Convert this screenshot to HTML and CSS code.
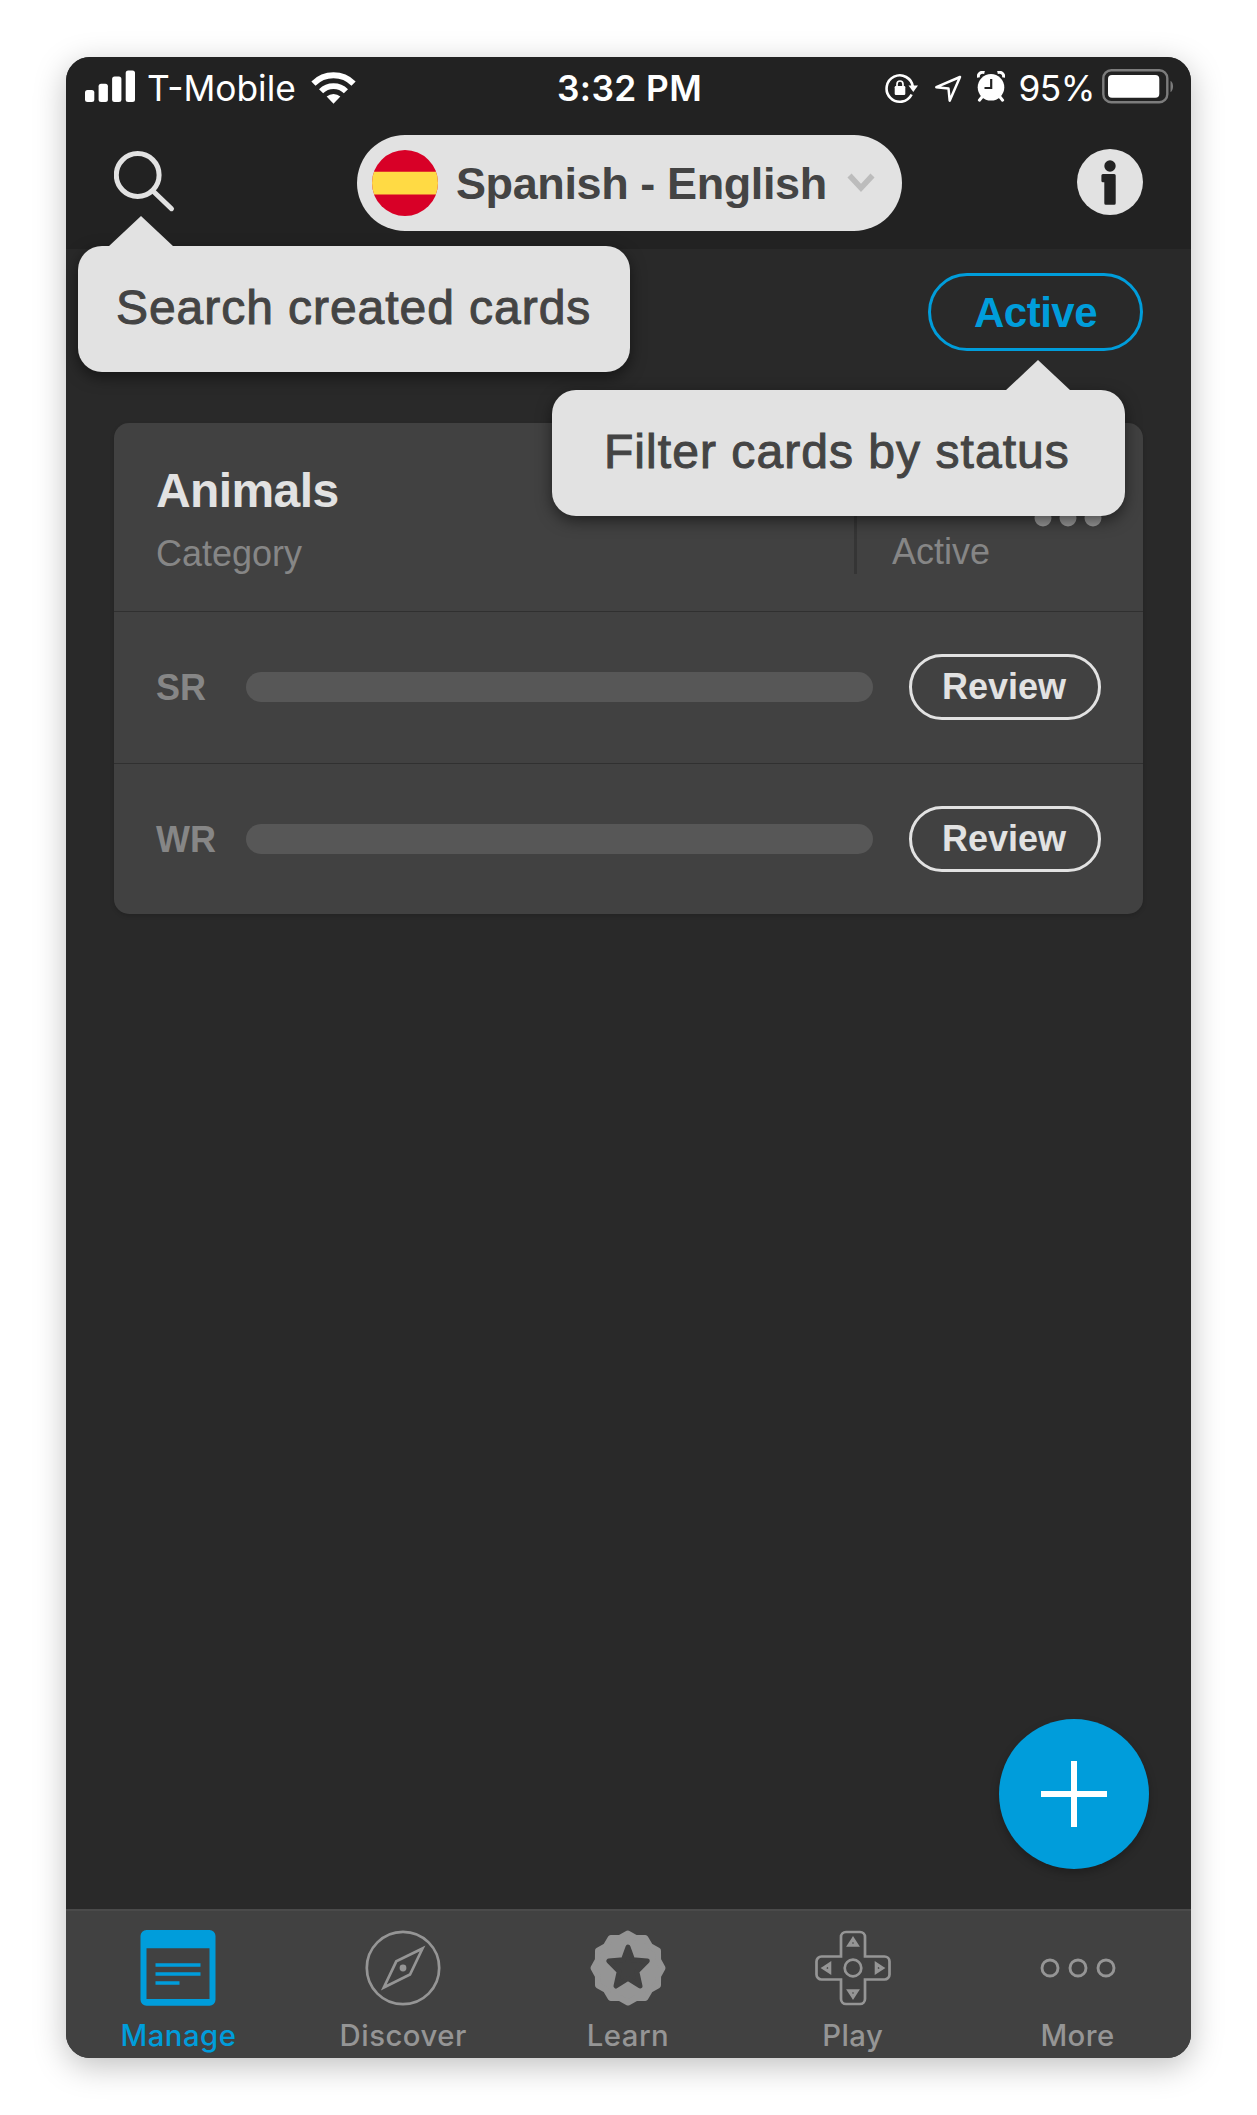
FILE: index.html
```html
<!DOCTYPE html>
<html lang="en">
<head>
<meta charset="utf-8">
<title>Manage cards</title>
<link rel="stylesheet" href="styles.css">
</head>
<body>
<div class="phone">
  <header class="header">
    <div class="status">
      <div class="status-left">
        <svg class="signal" width="50" height="32" viewBox="0 0 50 32"><g fill="#fff"><rect x="0" y="20" width="9.3" height="12" rx="2.5"/><rect x="13.6" y="13.7" width="9.3" height="18.3" rx="2.5"/><rect x="27.1" y="6.5" width="9.3" height="25.5" rx="2.5"/><rect x="40.7" y="0.5" width="9.3" height="31.5" rx="2.5"/></g></svg>
        <span class="carrier">T-Mobile</span>
        <svg class="wifi" width="45" height="33" viewBox="0 0 46 33"><g fill="none" stroke="#fff" stroke-width="6"><path d="M2.5 12.5a29 29 0 0 1 41 0"/><path d="M10.3 20.3a18 18 0 0 1 25.4 0"/></g><path d="M23 33l-7-7.2a10.5 10.5 0 0 1 14 0z" fill="#fff"/></svg>
      </div>
      <span class="clock">3:32 PM</span>
      <div class="status-right">
        <svg class="lock" width="33" height="32" viewBox="0 0 33 32"><path d="M26.600 22.500a13.200 13.200 0 1 1 1.300-7.500" fill="none" stroke="#fff" stroke-width="2.600"/><path d="M23.500 13.500h9.500l-4.700 6.500z" fill="#fff"/><rect x="9.700" y="14" width="10.600" height="9" rx="1.200" fill="#fff"/><path d="M12 14.500v-2.300a3 3.200 0 0 1 6 0v2.300" fill="none" stroke="#fff" stroke-width="1.700"/></svg>
        <svg class="arrow" width="28" height="28" viewBox="0 0 28 28"><path d="M26 2L2.300 12.200l12.200 1.300 1.200 12.200z" fill="none" stroke="#fff" stroke-width="2.500" stroke-linejoin="round"/></svg>
        <svg class="alarm" width="28" height="31" viewBox="0 0 28 31"><circle cx="14" cy="16.300" r="13.300" fill="#fff"/><path d="M1.500 6.500C.6 3 3.500.5 7.500 1.500M26.500 6.500c.9-3.500-2-6-6-5" fill="none" stroke="#fff" stroke-width="3"/><path d="M5 26l-2.600 3.200M23 26l2.600 3.200" stroke="#fff" stroke-width="3" stroke-linecap="round"/><path d="M14.200 8v9H7.500" fill="none" stroke="#222" stroke-width="2.200"/></svg>
        <span class="percent">95%</span>
        <svg class="battery" width="72" height="35" viewBox="0 0 72 35"><rect x="1.300" y="1.300" width="64" height="32" rx="8" fill="none" stroke="#7c7c7c" stroke-width="2.400"/><rect x="6" y="6" width="51.300" height="22.700" rx="4" fill="#fff"/><path d="M68.500 11.800c3.400 2 3.400 9.400 0 11.400z" fill="#7c7c7c"/></svg>
      </div>
    </div>
    <nav class="nav">
      <div class="search">
        <svg width="62" height="64" viewBox="0 0 62 64"><g fill="none" stroke="#e2e2e2" stroke-width="5"><circle cx="23.700" cy="25" r="21.400"/><path d="M39.500 41.500L57.500 58.700" stroke-linecap="round"/></g></svg>
        <div class="tip tip-search">Search created cards</div>
      </div>
      <div class="language">
        <svg class="flag" width="66" height="66" viewBox="0 0 66 66"><clipPath id="disc"><circle cx="33" cy="33" r="33"/></clipPath><g clip-path="url(#disc)"><path fill="#d80027" d="M0 0h66v66H0z"/><path fill="#ffda44" d="M0 21.700h66v22.800H0z"/></g></svg>
        <span class="language-name">Spanish - English</span>
        <svg class="chevron" width="28" height="20" viewBox="0 0 28 20"><path d="M2.500 2.500L14 14.800 25.500 2.500" fill="none" stroke="#bcbcbc" stroke-width="5.600"/></svg>
      </div>
      <svg class="info" width="66" height="66" viewBox="0 0 66 66"><circle cx="33" cy="33" r="33" fill="#e2e2e2"/><circle cx="33" cy="17" r="5.700" fill="#222"/><path d="M25.900 25h11.300a1.500 1.500 0 0 1 1.500 1.500v27.800a1.500 1.500 0 0 1-1.500 1.500h-8.400a1.500 1.500 0 0 1-1.500-1.500V33.200h-1.400a1.500 1.500 0 0 1-1.500-1.500v-5.200a1.500 1.500 0 0 1 1.500-1.500z" fill="#222"/></svg>
    </nav>
  </header>

  <main class="content">
    <div class="filter">
      <div class="filter-button">Active</div>
      <div class="tip tip-filter">Filter cards by status</div>
    </div>

    <section class="card">
      <div class="card-head">
        <div class="card-title">
          <h1>Animals</h1>
          <p>Category</p>
        </div>
        <div class="card-state">
          <span>Active</span>
        </div>
        <svg class="dots" width="68" height="18" viewBox="0 0 68 18"><g fill="#979797"><circle cx="9" cy="9" r="8.500"/><circle cx="34" cy="9" r="8.500"/><circle cx="59" cy="9" r="8.500"/></g></svg>
      </div>
      <div class="row"><span class="mode">SR</span><div class="bar"></div><div class="review">Review</div></div>
      <div class="row"><span class="mode">WR</span><div class="bar"></div><div class="review">Review</div></div>
    </section>

    <div class="add">
      <svg width="66" height="66" viewBox="0 0 66 66"><path d="M33 0v66M0 33h66" stroke="#fff" stroke-width="6"/></svg>
    </div>
  </main>

  <footer class="tabs">
    <div class="tab tab-on">
      <svg width="76" height="76" viewBox="0 0 76 76"><path fill="currentColor" fill-rule="evenodd" d="M6.500 0h63a6 6 0 0 1 6 6v63.700a6 6 0 0 1-6 6h-63a6 6 0 0 1-6-6V6a6 6 0 0 1 6-6zm0 18.200V69h63V18.200z"/><path d="M15.500 35h45M15.500 44h45M15.500 53h24" stroke="currentColor" stroke-width="3.600"/></svg>
      <span>Manage</span>
    </div>
    <div class="tab">
      <svg width="76" height="76" viewBox="0 0 76 76"><g fill="none" stroke="currentColor" stroke-width="2.700"><circle cx="38" cy="38" r="36.200"/><path d="M57.500 18.500L45 44.500 18.800 57.500 31.300 31.300z"/></g><circle cx="38" cy="38" r="3.400" fill="currentColor"/></svg>
      <span>Discover</span>
    </div>
    <div class="tab">
      <svg width="76" height="76" viewBox="0 0 76 76"><path fill="currentColor" stroke="currentColor" stroke-width="6" stroke-linejoin="round" d="M38 3.500L46 8 55.300 8.100 60 16 68 20.700 68.100 30 72.500 38 68.100 46 68 55.300 60 60 55.300 68 46 68.100 38 72.500 30 68.100 20.700 68 16 60 8 55.300 7.900 46 3.500 38 7.900 30 8 20.700 16 16 20.700 8 30 7.900z"/><path fill="#414141" stroke="#414141" stroke-width="5" stroke-linejoin="round" d="M38 17l4.600 12.800 14.600 1.300-10.400 10.400L50 56 38 48.500 26 56l3.200-14.500L18.800 31.100l14.600-1.300z"/></svg>
      <span>Learn</span>
    </div>
    <div class="tab">
      <svg width="76" height="76" viewBox="0 0 76 76"><g fill="none" stroke="currentColor" stroke-width="2.700"><path d="M31 2h14a5 5 0 0 1 5 5v19.500h19.500a5 5 0 0 1 5 5v13a5 5 0 0 1-5 5H50V69a5 5 0 0 1-5 5H31a5 5 0 0 1-5-5V49.500H6.500a5 5 0 0 1-5-5v-13a5 5 0 0 1 5-5H26V7a5 5 0 0 1 5-5z"/><circle cx="38" cy="38" r="8.300"/><path d="M38 9l-4 6.200h8zM38 67l-4-6.200h8zM8.500 38l6.200-4v8zM67.500 38l-6.200-4v8z" stroke-width="3.200"/></g></svg>
      <span>Play</span>
    </div>
    <div class="tab">
      <svg width="76" height="76" viewBox="0 0 76 76"><g fill="none" stroke="currentColor" stroke-width="2.900"><circle cx="10" cy="38" r="8"/><circle cx="38" cy="38" r="8"/><circle cx="66" cy="38" r="8"/></g></svg>
      <span>More</span>
    </div>
  </footer>
</div>
</body>
</html>
```
FILE: styles.css
```css
* { box-sizing: border-box; }
body {
  margin: 0;
  padding: 57px 66px;
  background: #fff;
  font-family: "Liberation Sans", Arial, sans-serif;
  color: #e2e2e2;
}
svg { display: block; flex: none; }

.phone {
  display: flex;
  flex-direction: column;
  width: 1125px;
  height: 2001px;
  border-radius: 24px;
  background: #292929;
  box-shadow: 0 8px 32px rgba(0, 0, 0, .25);
}

/* Header */
.header {
  flex: none;
  height: 192px;
  border-radius: 24px 24px 0 0;
  background: #222;
}
.status {
  display: grid;
  grid-template-columns: 1fr auto 1fr;
  align-items: center;
  height: 60px;
  padding: 4px 17px 0 19px;
  font: 400 35.300px/44px Inter, sans-serif;
  color: #fff;
}
.status-left, .status-right { display: flex; align-items: center; }
.status-right { justify-content: flex-end; }
.signal { margin-top: -7px; }
.carrier { margin-left: 12px; letter-spacing: 0; }
.wifi { margin: -4px 0 0 15px; }
.clock { font-weight: 600; letter-spacing: .4px; }
.lock { margin-top: -3px; }
.arrow { margin-left: 16px; }
.alarm { margin: -6px 0 0 15px; }
.percent { margin-left: 13px; letter-spacing: -.5px; }
.battery { margin: -6px 0 0 7px; }

.nav {
  display: flex;
  align-items: center;
  justify-content: space-between;
  height: 132px;
  padding: 0 48px;
}
.search { position: relative; width: 68px; height: 66px; }
.language {
  display: flex;
  align-items: center;
  width: 545px;
  height: 96px;
  padding: 0 27px 0 15px;
  border-radius: 48px;
  background: #e2e2e2;
  color: #444;
}
.language-name {
  margin: 2px 0 0 18px;
  font-size: 45px;
  font-weight: 700;
  line-height: 54px;
  letter-spacing: -.400px;
  white-space: nowrap;
}
.chevron { margin-left: auto; }
.info { margin-top: -3px; }

/* Callouts float above the screen */
.tip {
  position: absolute;
  z-index: 2;
  height: 126px;
  border-radius: 24px;
  background: #e2e2e2;
  box-shadow: 0 5px 15px rgba(0, 0, 0, .5);
  color: #444;
  font-size: 48px;
  line-height: 124px;
  letter-spacing: .950px;
  white-space: nowrap;
  -webkit-text-stroke: 1px #444;
}
.tip::before {
  content: "";
  position: absolute;
  top: -30px;
  width: 66px;
  height: 31px;
  background: #e2e2e2;
  clip-path: polygon(50% 0, 100% 100%, 0 100%);
}
.tip-search { top: 96px; left: -36px; width: 552px; padding-left: 38px; }
.tip-search::before { left: 30px; }
.tip-filter { top: 117px; right: 18px; width: 573px; padding-left: 52px; letter-spacing: 1.050px; }
.tip-filter::before { right: 54px; }

/* Content */
.content {
  display: flex;
  flex: 1;
  flex-direction: column;
  padding: 24px 48px 40px;
}
.filter {
  position: relative;
  display: flex;
  justify-content: flex-end;
  margin: 0 0 72px;
}
.filter-button {
  width: 215px;
  height: 78px;
  border: 3px solid #009ddb;
  border-radius: 39px;
  color: #009ddb;
  font-size: 42px;
  font-weight: 700;
  line-height: 73px;
  letter-spacing: -.5px;
  text-align: center;
}

.card {
  height: 490.500px;
  border-radius: 15px;
  background: #414141;
  box-shadow: 0 2px 4px rgba(0, 0, 0, .15);
}
.card-head {
  display: flex;
  height: 188px;
  padding: 39px 42px 0;
}
.card-title { flex: none; width: 698px; }
.card h1 {
  margin: 0;
  font-size: 48px;
  line-height: 58px;
  letter-spacing: -.600px;
}
.card p {
  margin: 12px 0 0;
  color: #868686;
  font-size: 36px;
  line-height: 44px;
}
.card-state {
  display: flex;
  flex: none;
  align-items: flex-end;
  width: 151px;
  height: 112px;
  padding-left: 35px;
  border-left: 3px solid #353535;
  color: #868686;
  font-size: 36px;
  line-height: 44px;
}
.dots { margin: 47px 0 0 29px; }

.row {
  display: flex;
  align-items: center;
  height: 151.500px;
  padding: 0 42px;
  border-top: 1px solid #303030;
}
.mode {
  width: 90px;
  padding-top: 2px;
  color: #868686;
  font-size: 36px;
  font-weight: 700;
}
.bar {
  flex: 1;
  height: 30px;
  border-radius: 15px;
  background: #575757;
}
.review {
  width: 192px;
  height: 66px;
  margin-left: 36px;
  padding-right: 2px;
  border: 3px solid #e2e2e2;
  border-radius: 33px;
  font-size: 36px;
  font-weight: 700;
  line-height: 60px;
  text-align: center;
}

.add {
  display: flex;
  align-items: center;
  justify-content: center;
  align-self: flex-end;
  width: 150px;
  height: 150px;
  margin: auto -6px 0 0;
  border-radius: 50%;
  background: #009ddb;
  box-shadow: 0 4px 8px rgba(0, 0, 0, .25);
}

/* Tab bar */
.tabs {
  display: grid;
  grid-template-columns: repeat(5, 1fr);
  flex: none;
  height: 149px;
  padding-right: 1px;
  border-top: 2px solid #4a4a4a;
  border-radius: 0 0 24px 24px;
  background: #414141;
}
.tab {
  display: flex;
  flex-direction: column;
  align-items: center;
  gap: 12px;
  padding-top: 19px;
  color: #959595;
  font: 500 29.300px/36px Inter, sans-serif;
  letter-spacing: .5px;
}
.tab-on { color: #009ddb; }
```
